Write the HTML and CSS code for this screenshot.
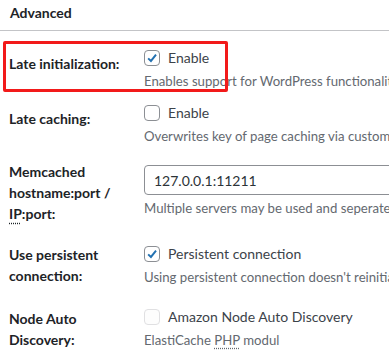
FILE: index.html
```html
<!DOCTYPE html>
<html lang="en">
<head>
    <meta charset="UTF-8">
    <meta name="viewport" content="width=device-width, initial-scale=1.0">
    <title>Advanced</title>
    <link rel="stylesheet" href="styles.css">
</head>
<body>

    <div class="section-title">Advanced</div>

    <div class="settings">
        <!-- highlighted row -->
        <div class="row row-first">
            <div class="row-label label-low">Late initialization:</div>
            <div class="row-field">
                <label class="check"><span class="box checked"><svg viewBox="0 0 16 16"><path d="M3.6 8.4 L6.8 11.4 L12.6 4.2"/></svg></span>Enable</label>
                <p class="desc">Enables support for WordPress functionality in fragment caching for the page caching engine.</p>
            </div>
            <div class="highlight"></div>
        </div>

        <div class="row row-tight">
            <div class="row-label label-low">Late caching:</div>
            <div class="row-field">
                <label class="check"><span class="box"></span>Enable</label>
                <p class="desc">Overwrites key of page caching via custom filters by postponing entry extraction.</p>
            </div>
        </div>

        <div class="row row-input">
            <div class="row-label">Memcached hostname:port / <abbr>IP</abbr>:port:</div>
            <div class="row-field field-input">
                <input type="text" class="text-input" value="127.0.0.1:11211">
                <p class="desc">Multiple servers may be used and seperated by a comma; e.g. 192.168.1.100:11211</p>
            </div>
        </div>

        <div class="row">
            <div class="row-label">Use persistent connection:</div>
            <div class="row-field">
                <label class="check"><span class="box checked"><svg viewBox="0 0 16 16"><path d="M3.6 8.4 L6.8 11.4 L12.6 4.2"/></svg></span>Persistent connection</label>
                <p class="desc">Using persistent connection doesn't reinitialize memcached on each request.</p>
            </div>
        </div>

        <div class="row">
            <div class="row-label label-nudge">Node Auto Discovery:</div>
            <div class="row-field">
                <label class="check disabled"><span class="box"></span>Amazon Node Auto Discovery</label>
                <p class="desc">ElastiCache <abbr>PHP</abbr> modul</p>
            </div>
        </div>
    </div>

</body>
</html>
```

FILE: styles.css
```css
body { margin: 0; font-family: Lato, "Noto Sans", sans-serif; font-size: 14px; color: #3c434a; background: #fff; overflow: hidden; white-space: nowrap; }
abbr { text-decoration: underline dotted; text-underline-offset: 3px; }

.section-title { padding: 3px 10px 7px; line-height: 20px; font-weight: 700; color: #1d2327; border-bottom: 1px solid #c3c4c7; }

.settings { margin-top: 17px; }
.row { display: flex; align-items: flex-start; padding-left: 9px; margin-top: 20px; }
.row-first { margin-top: 0; position: relative; }
.row-tight { margin-top: 12px; }
.row-input { margin-top: 15px; }

.row-label { width: 135px; flex-shrink: 0; font-weight: 700; color: #1d2327; line-height: 21px; white-space: normal; }
.label-low { padding-top: 5px; }
.label-nudge { padding-top: 1px; }
.row-label abbr { text-underline-offset: 4px; }

.row-field { min-width: 0; }
.field-input { padding-top: 4px; }

.check { display: flex; align-items: center; gap: 8px; height: 20px; line-height: 20px; }
.box { width: 16px; height: 16px; box-sizing: border-box; border: 1px solid #8c8f94; border-radius: 4px; background: #fff; display: flex; align-items: center; justify-content: center; }
.box svg { width: 14px; height: 14px; fill: none; stroke: #2271b1; stroke-width: 2.2; }
.check.disabled .box { border-color: #e0e0e2; background: #fdfdfd; }

.desc { margin: 3px 0 0; font-size: 13.2px; line-height: 20px; color: #646970; }

.text-input { width: 320px; height: 30px; box-sizing: border-box; border: 1px solid #8c8f94; border-radius: 4px; padding: 0 9px; font-family: inherit; font-size: 14px; color: #2c3338; display: block; }

.highlight { position: absolute; left: 3px; top: -7px; width: 225px; height: 51px; box-sizing: border-box; border: 3px solid #f21a1a; border-radius: 2px; pointer-events: none; }
```
